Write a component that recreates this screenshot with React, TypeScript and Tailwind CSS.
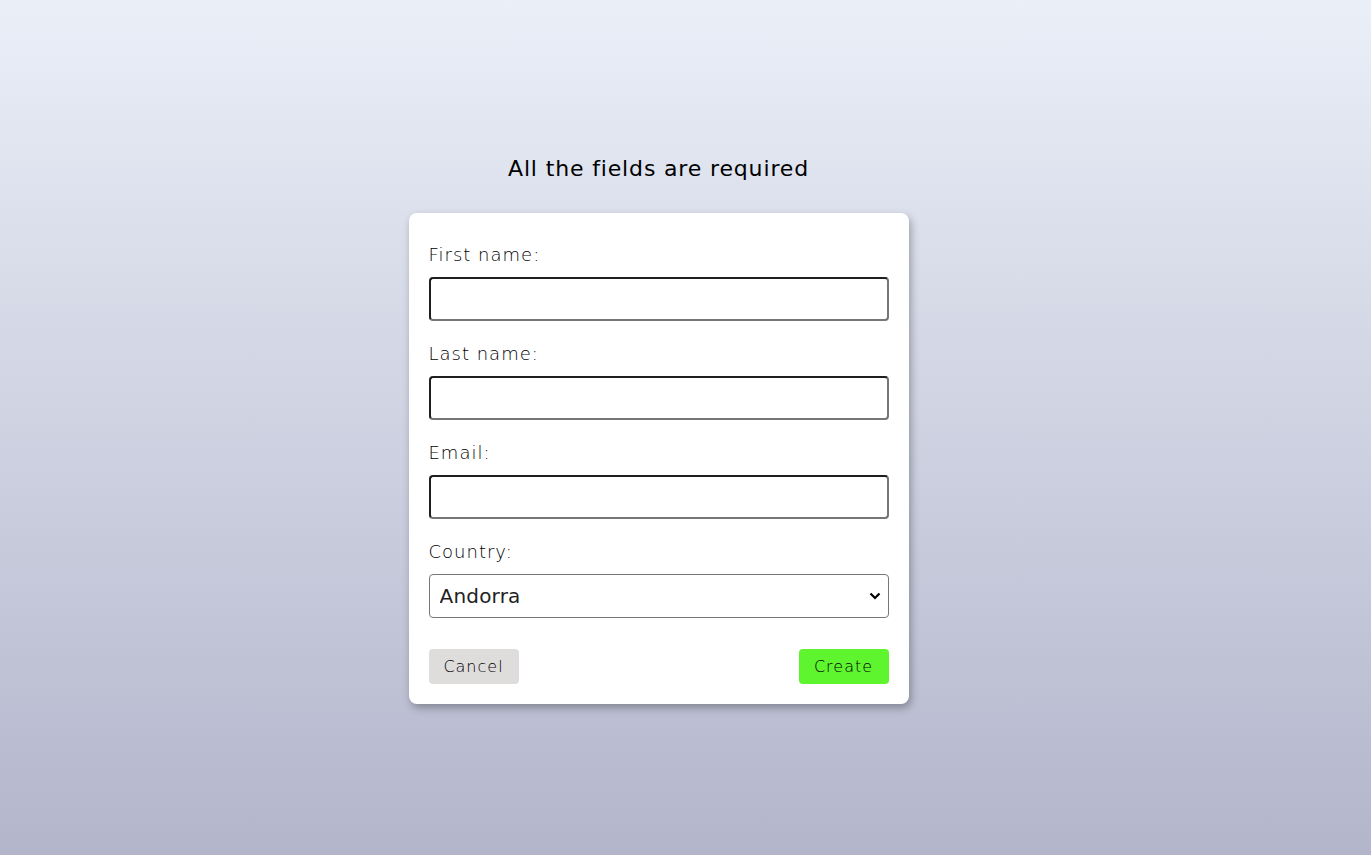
import { useState } from "react";

const fields = [
    { id: "firstName", label: "First name:", type: "text" },
    { id: "lastName", label: "Last name:", type: "text" },
    { id: "email", label: "Email:", type: "email" },
];

const countries = ["Andorra", "Austria", "Belgium", "France", "Germany", "Spain"];

export default function App() {
    const [country, setCountry] = useState("Andorra");

    return (
        <div className="flex min-h-[855px] flex-col items-center bg-gradient-to-b from-[#eaeff8] to-[#b3b6cb] pr-[54px] pt-[154px] font-['DejaVu_Sans',sans-serif] text-[#111]">
            <h1 className="text-[22px] font-normal leading-[30px] tracking-[0.85px] text-black">
                All the fields are required
            </h1>

            <form className="mt-[29px] flex w-[500px] flex-col rounded-lg bg-white p-5 shadow-[2px_4px_8px_rgba(0,0,0,0.3)]">
                {fields.map((f) => (
                    <div key={f.id} className="mb-[11px] flex flex-col">
                        <label
                            htmlFor={f.id}
                            className="my-[11px] text-[18px] font-extralight leading-[22px] tracking-[1px] text-black"
                        >
                            {f.label}
                        </label>
                        <input
                            id={f.id}
                            type={f.type}
                            className="h-[44px] w-full rounded-[4px] border-2 border-t-[#1f1f1f] border-l-[#1f1f1f] border-b-[#767676] border-r-[#767676] bg-white px-2 text-[18px] outline-none"
                        />
                    </div>
                ))}

                <div className="flex flex-col">
                    <label
                        htmlFor="country"
                        className="my-[11px] text-[18px] font-extralight leading-[22px] tracking-[1px] text-black"
                    >
                        Country:
                    </label>
                    <div className="relative">
                        <select
                            id="country"
                            value={country}
                            onChange={(e) => setCountry(e.target.value)}
                            className="h-[44px] w-full appearance-none rounded-[4px] border border-[#767676] bg-white pl-[10px] text-[20px] font-normal tracking-[0.2px] text-[#222] outline-none"
                        >
                            {countries.map((c) => (
                                <option key={c}>{c}</option>
                            ))}
                        </select>
                        <svg
                            aria-hidden
                            viewBox="0 0 12 8"
                            className="pointer-events-none absolute right-[8px] top-[18px] h-[8px] w-[12px]"
                        >
                            <path
                                d="M1.5 1.5 L6 6 L10.5 1.5"
                                fill="none"
                                stroke="#000"
                                strokeWidth="2.2"
                            />
                        </svg>
                    </div>
                </div>

                <div className="mt-[31px] flex items-center justify-between">
                    <button
                        type="button"
                        className="h-[35px] w-[90px] rounded-[4px] bg-[#dfdcdc] text-[16px] font-extralight tracking-[1px] text-black"
                    >
                        Cancel
                    </button>
                    <button
                        type="submit"
                        className="h-[35px] w-[90px] rounded-[4px] bg-[#5ef52f] text-[16px] font-extralight tracking-[1px] text-black"
                    >
                        Create
                    </button>
                </div>
            </form>
        </div>
    );
}
